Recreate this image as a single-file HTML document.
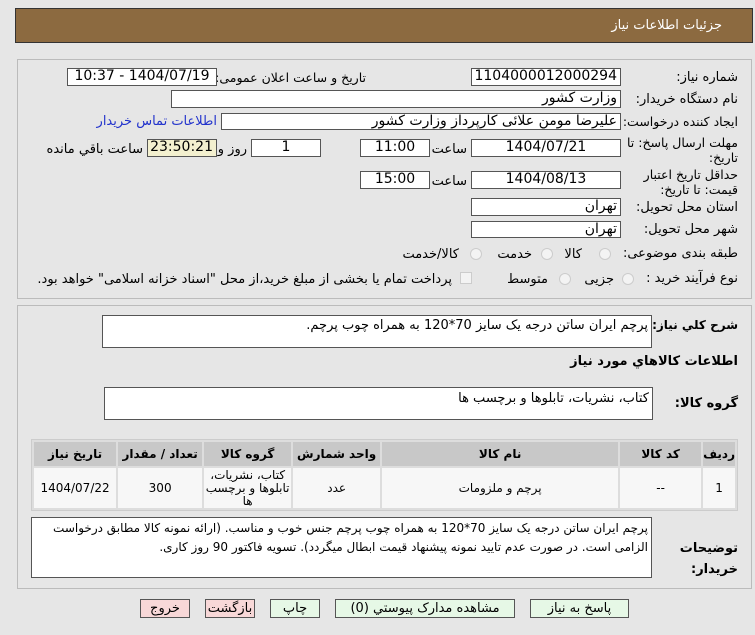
<!DOCTYPE html>
<html><head><meta charset="utf-8"><style>
*{box-sizing:border-box;margin:0;padding:0}
body{width:755px;height:635px;background:#e6e6e6;font-family:Tahoma,"DejaVu Sans","Liberation Sans",sans-serif;font-size:12px;color:#000;position:relative;overflow:hidden;direction:rtl}
.a{position:absolute;white-space:nowrap}
.box{position:absolute;background:#fff;border:1px solid #555;font-size:14px;line-height:15px;padding:0 3px;text-align:right;white-space:nowrap;overflow:hidden}
.c{text-align:center}
.lbl{position:absolute;font-size:13px;white-space:nowrap;text-align:right}
.panel{position:absolute;left:17px;width:735px;border:1px solid #bbb;background:#e6e6e6}
.rad{position:absolute;width:12px;height:12px;border-radius:50%;border:1px solid #ccc;background:#f3f3f3}
.btn{position:absolute;height:19px;border:1px solid #555;background:#e6f8e6;font-size:13px;text-align:center;line-height:17px}
.pink{background:#f8d8d8}
table{position:absolute;left:31px;top:439px;width:707px;border-collapse:separate;border-spacing:2px;background:#ddd;border:1px solid #ccc}
th{background:#c8c8c8;font-size:12px;height:24px;font-weight:bold}
td{background:#f7f7f7;font-size:12px;text-align:center;height:40px;line-height:13px}
</style></head><body>
<div class="a" style="left:15px;top:8px;width:738px;height:35px;background:#8c6a40;border:1px solid #333"></div>
<div class="a" style="right:33px;top:18px;color:#fff;font-size:13px">جزئیات اطلاعات نیاز</div>

<div class="panel" style="top:59px;height:240px"></div>
<div class="panel" style="top:305px;height:284px"></div>

<div class="lbl" style="right:17px;top:70px">شماره نیاز:</div>
<div class="box c" style="left:471px;top:68px;width:150px;height:18px">1104000012000294</div>
<div class="lbl" style="right:389px;top:70px;font-size:12.5px">تاریخ و ساعت اعلان عمومی:</div>
<div class="box c" style="left:67px;top:68px;width:150px;height:18px">1404/07/19 - 10:37</div>

<div class="lbl" style="right:17px;top:92px">نام دستگاه خریدار:</div>
<div class="box" style="left:171px;top:90px;width:450px;height:18px">وزارت کشور</div>

<div class="lbl" style="right:17px;top:114px;font-size:12.5px">ایجاد کننده درخواست:</div>
<div class="box" style="left:221px;top:113px;width:400px;height:17px">علیرضا مومن علائی کارپرداز وزارت کشور</div>
<div class="lbl" style="right:538px;top:114px;color:#2233cc">اطلاعات تماس خریدار</div>

<div class="lbl" style="right:17px;top:135px;line-height:15px;font-size:12.5px">مهلت ارسال پاسخ: تا<br>تاریخ:</div>
<div class="box c" style="left:471px;top:139px;width:150px;height:18px">1404/07/21</div>
<div class="lbl" style="right:288px;top:142px">ساعت</div>
<div class="box c" style="left:360px;top:139px;width:70px;height:18px">11:00</div>
<div class="box c" style="left:251px;top:139px;width:70px;height:18px">1</div>
<div class="lbl" style="right:508px;top:142px">روز و</div>
<div class="box c" style="left:147px;top:139px;width:70px;height:18px;background:#f3f0cf">23:50:21</div>
<div class="lbl" style="right:612px;top:142px">ساعت باقي مانده</div>

<div class="lbl" style="right:17px;top:167px;line-height:15px;font-size:12.5px">حداقل تاریخ اعتبار<br>قیمت: تا تاریخ:</div>
<div class="box c" style="left:471px;top:171px;width:150px;height:18px">1404/08/13</div>
<div class="lbl" style="right:288px;top:174px">ساعت</div>
<div class="box c" style="left:360px;top:171px;width:70px;height:18px">15:00</div>

<div class="lbl" style="right:17px;top:200px">استان محل تحویل:</div>
<div class="box" style="left:471px;top:198px;width:150px;height:18px">تهران</div>
<div class="lbl" style="right:17px;top:222px">شهر محل تحویل:</div>
<div class="box" style="left:471px;top:221px;width:150px;height:17px">تهران</div>

<div class="lbl" style="right:17px;top:246px">طبقه بندی موضوعی:</div>
<div class="rad" style="left:599px;top:248px"></div><div class="lbl" style="right:173px;top:247px">کالا</div>
<div class="rad" style="left:541px;top:248px"></div><div class="lbl" style="right:223px;top:247px">خدمت</div>
<div class="rad" style="left:470px;top:248px"></div><div class="lbl" style="right:296px;top:247px">کالا/خدمت</div>

<div class="lbl" style="right:17px;top:271px">نوع فرآیند خرید :</div>
<div class="rad" style="left:622px;top:273px"></div><div class="lbl" style="right:141px;top:272px">جزیی</div>
<div class="rad" style="left:559px;top:273px"></div><div class="lbl" style="right:207px;top:272px">متوسط</div>
<div class="a" style="left:460px;top:272px;width:12px;height:12px;border:1px solid #ccc;background:#f3f3f3"></div>
<div class="lbl" style="right:303px;top:272px">پرداخت تمام یا بخشی از مبلغ خرید،از محل "اسناد خزانه اسلامی" خواهد بود.</div>

<div class="lbl" style="right:17px;top:318px;font-weight:bold;font-size:12px">شرح کلي نیاز:</div>
<div class="box" style="left:102px;top:315px;width:550px;height:33px;font-size:13px;padding-top:2px">پرچم ایران ساتن درجه یک سایز 70*120 به همراه چوب پرچم.</div>
<div class="lbl" style="right:17px;top:354px;font-weight:bold">اطلاعات کالاهاي مورد نیاز</div>
<div class="lbl" style="right:17px;top:396px;font-weight:bold">گروه کالا:</div>
<div class="box" style="left:104px;top:387px;width:549px;height:33px;font-size:13px;padding-top:3px">کتاب، نشریات، تابلوها و برچسب ها</div>

<table><tr><th style="width:28px">ردیف</th><th style="width:81px">کد کالا</th><th style="width:236px">نام کالا</th><th style="width:87px">واحد شمارش</th><th style="width:87px">گروه کالا</th><th style="width:84px">تعداد / مقدار</th><th>تاریخ نیاز</th></tr>
<tr><td>1</td><td>--</td><td>پرچم و ملزومات</td><td>عدد</td><td>کتاب، نشریات، تابلوها و برچسب ها</td><td>300</td><td>1404/07/22</td></tr></table>

<div class="lbl" style="right:17px;top:538px;font-weight:bold;line-height:21px">توضیحات<br>خریدار:</div>
<div class="box" style="left:31px;top:517px;width:621px;height:61px;font-size:12px;white-space:normal;line-height:19px;padding-top:1px">پرچم ایران ساتن درجه یک سایز 70*120 به همراه چوب پرچم جنس خوب و مناسب. (ارائه نمونه کالا مطابق درخواست الزامی است. در صورت عدم تایید نمونه پیشنهاد قیمت ابطال میگردد). تسویه فاکتور 90 روز کاری.</div>

<div class="btn" style="left:530px;top:599px;width:99px">پاسخ به نیاز</div>
<div class="btn" style="left:335px;top:599px;width:180px">مشاهده مدارک پیوستي (0)</div>
<div class="btn" style="left:270px;top:599px;width:50px">چاپ</div>
<div class="btn pink" style="left:205px;top:599px;width:50px">بازگشت</div>
<div class="btn pink" style="left:140px;top:599px;width:50px">خروج</div>
</body></html>
